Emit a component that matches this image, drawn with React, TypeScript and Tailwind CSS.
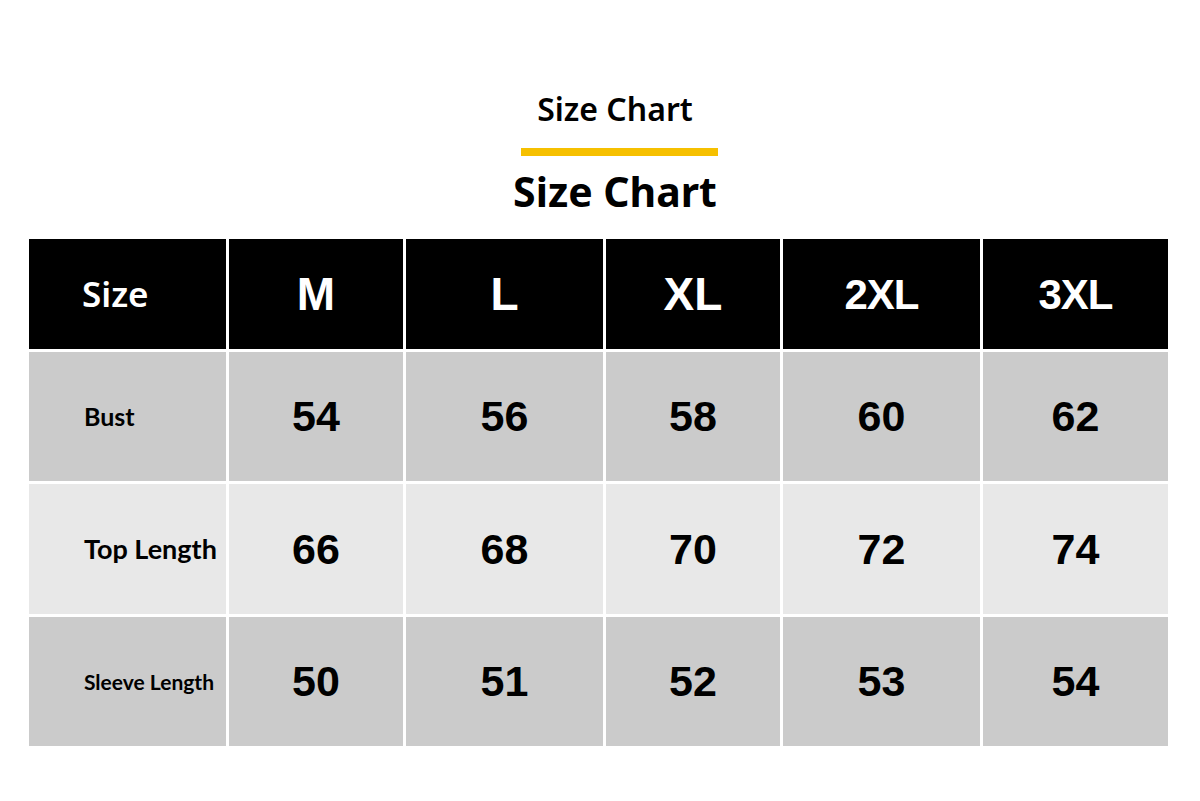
import React from "react";

const sizes = [
  { s: "M", c: "text-[46px]" },
  { s: "L", c: "text-[46px]" },
  { s: "XL", c: "text-[46px]" },
  { s: "2XL", c: "text-[42px] tracking-[-1px]" },
  { s: "3XL", c: "text-[42px] tracking-[-1px]" },
];

const rows = [
  { label: "Bust", labelClass: "text-[25px]", bg: "bg-[#cbcbcb]", h: "h-[129px]", values: ["54", "56", "58", "60", "62"] },
  { label: "Top Length", labelClass: "text-[27px]", bg: "bg-[#e8e8e8]", h: "h-[130px]", values: ["66", "68", "70", "72", "74"] },
  { label: "Sleeve Length", labelClass: "text-[21px]", bg: "bg-[#cbcbcb]", h: "h-[129px]", values: ["50", "51", "52", "53", "54"] },
];

export default function App() {
  return (
    <div className="w-[1200px] h-[801px] bg-white flex flex-col overflow-hidden">
      <div className="flex flex-col items-center ml-[30px] pt-[88px] font-['Noto_Sans','Open_Sans',sans-serif] text-black">
        <h2 className="text-[32px] leading-[42px] font-semibold">Size Chart</h2>
        <div className="w-[197px] h-[8px] bg-[#f6c000] mt-[18px] ml-[8px]" />
        <h1 className="text-[41px] leading-[52px] font-bold mt-[9px]">Size Chart</h1>
      </div>

      <div className="ml-[29px] mt-[22px] grid grid-cols-[197px_174px_197px_174px_197px_185px] gap-[3px]">
        <div className="h-[110px] bg-black flex items-center pl-[53px] text-white text-[35px] font-semibold font-['Noto_Sans','Open_Sans',sans-serif]">
          Size
        </div>
        {sizes.map((h) => (
          <div key={h.s} className={`h-[110px] bg-black flex items-center justify-center text-white font-bold font-['Liberation_Sans',Arial,sans-serif] ${h.c}`}>
            {h.s}
          </div>
        ))}
        {rows.map((r) => (
          <React.Fragment key={r.label}>
            <div className={`${r.h} ${r.bg} flex items-center pl-[55px] text-black font-bold font-['Lato','Noto_Sans',sans-serif] ${r.labelClass}`}>
              {r.label}
            </div>
            {r.values.map((v, i) => (
              <div key={i} className={`${r.h} ${r.bg} flex items-center justify-center text-black text-[43px] font-bold font-['Liberation_Sans',Arial,sans-serif]`}>
                {v}
              </div>
            ))}
          </React.Fragment>
        ))}
      </div>
    </div>
  );
}
